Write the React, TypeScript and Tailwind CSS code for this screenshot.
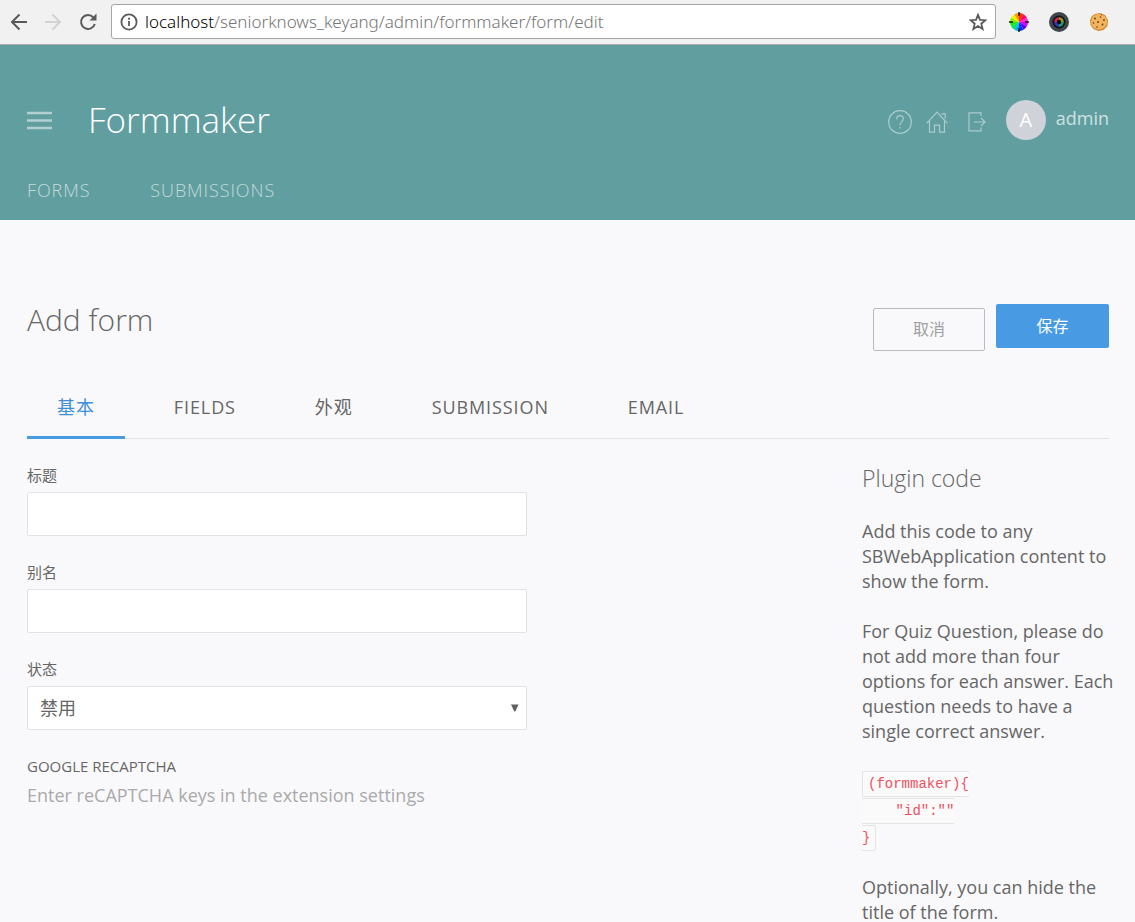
import type { ReactNode } from "react";

const navLinks = ["Forms", "Submissions"];

const tabs = ["基本", "Fields", "外观", "Submission", "Email"];

function BackIcon() {
  return (
    <svg width="18" height="18" viewBox="0 0 18 18" fill="none" stroke="currentColor" strokeWidth="2">
      <path d="M17 9H2.500M9.500 1.500 2 9l7.500 7.500" />
    </svg>
  );
}

function ForwardIcon() {
  return (
    <svg width="18" height="18" viewBox="0 0 18 18" fill="none" stroke="currentColor" strokeWidth="2">
      <path d="M1 9h14.500M8.500 1.500 16 9l-7.500 7.500" />
    </svg>
  );
}

function ReloadIcon() {
  return (
    <svg width="18" height="18" viewBox="0 0 18 18">
      <path d="M14.300 4.300A7 7 0 1 0 15.800 11" fill="none" stroke="currentColor" strokeWidth="2" />
      <path d="M17.500 0.500v7H10.500z" fill="currentColor" />
    </svg>
  );
}

function InfoIcon() {
  return (
    <svg width="18" height="18" viewBox="0 0 18 18" fill="none" stroke="#5a5a5a" strokeWidth="1.800">
      <circle cx="9" cy="9" r="7.600" />
      <path d="M9 8v5M9 4.800v2" />
    </svg>
  );
}

function StarIcon() {
  return (
    <svg width="18" height="18" viewBox="0 0 18 18" fill="none" stroke="#5a5a5a" strokeWidth="1.800">
      <path d="m9 1.800 2 5 5.500.4-4.200 3.500 1.300 5.300L9 13.100 4.400 16l1.300-5.300L1.500 7.200 7 6.800z" />
    </svg>
  );
}

const wheel = ["#ff2ad0", "#d800ff", "#5a00ff", "#0030ff", "#00b4e8", "#00e070", "#20e800", "#90f000", "#f0f000", "#ff9000", "#ff3000", "#ff0070"];

function ColorWheelIcon() {
  const point = (degrees: number) => {
    const a = (degrees * Math.PI) / 180;
    return `${10 + 9 * Math.cos(a)} ${10 + 9 * Math.sin(a)}`;
  };
  return (
    <svg width="20" height="20" viewBox="0 0 20 20">
      {wheel.map((color, i) => (
        <path key={color} d={`M10 10L${point(i * 30 - 30)}A9 9 0 0 1 ${point(i * 30)}Z`} fill={color} />
      ))}
      <path d="M10 0v4M10 16v4M0 10h4M16 10h4" stroke="#111" strokeWidth="1.400" />
    </svg>
  );
}

function LensIcon() {
  return (
    <svg width="20" height="20" viewBox="0 0 20 20">
      <circle cx="10" cy="10" r="10" fill="#41464d" />
      <circle cx="10" cy="10" r="6.500" fill="#101216" />
      <g fill="none" strokeWidth="2.600">
        <path d="M6.500 10A3.500 3.500 0 0 1 10 6.500" stroke="#d82050" />
        <path d="M10 6.500a3.500 3.500 0 0 1 3.500 3.500" stroke="#8a9a20" />
        <path d="M13.500 10a3.500 3.500 0 0 1-3.500 3.500" stroke="#18a060" />
        <path d="M10 13.500A3.500 3.500 0 0 1 6.500 10" stroke="#4030c0" />
      </g>
      <circle cx="10" cy="10" r="1.800" fill="#080808" />
    </svg>
  );
}

function CookieIcon() {
  return (
    <svg width="20" height="20" viewBox="0 0 20 20">
      <path d="M6 2 11 1l5 2 3 5-.5 6-4 4-5 1-5-2-3-4L1 8l2-4z" fill="#d48a34" />
      <path d="M7 2.500 11 2l4.500 2L18 8l-.5 5-3.500 3.500-5 1-4.500-2L2 12l.3-4L4 4.500z" fill="#f2b45e" />
      <g fill="#6b3a12">
        <circle cx="6" cy="6.500" r=".9" />
        <circle cx="11.500" cy="5" r=".8" />
        <circle cx="15" cy="8" r=".9" />
        <circle cx="9" cy="10" r=".9" />
        <circle cx="4.500" cy="11" r=".8" />
        <circle cx="13.500" cy="12.500" r=".9" />
        <circle cx="8" cy="15" r=".8" />
        <circle cx="12.500" cy="2.800" r=".6" />
      </g>
    </svg>
  );
}

function MenuIcon() {
  return (
    <svg width="25" height="19" viewBox="0 0 25 19" stroke="currentColor" strokeWidth="2.400">
      <path d="M0 2h25M0 9.500h25M0 17h25" />
    </svg>
  );
}

function HelpIcon() {
  return (
    <svg width="24" height="24" viewBox="0 0 24 24" fill="none" stroke="currentColor" strokeWidth="1.200">
      <circle cx="12" cy="12" r="11.300" />
      <path d="M8.700 9.200c0-2.200 1.400-3.500 3.300-3.500s3.300 1.300 3.300 3.200c0 2.700-3.300 2.900-3.300 6.300M12 17v1.500" />
    </svg>
  );
}

function HomeIcon() {
  return (
    <svg width="22" height="22" viewBox="0 0 22 22" fill="none" stroke="currentColor" strokeWidth="1.200">
      <path d="M.6 12.400 11 1.200l10.400 11.200M3.500 10v11.200h5v-7h5v7h5V10M15.500 2.800h3.700v5" />
    </svg>
  );
}

function LogoutIcon() {
  return (
    <svg width="18" height="20" viewBox="0 0 18 20" fill="none" stroke="currentColor" strokeWidth="1.200">
      <path d="M13 4V.8H1v18h12v-3.200M6 10h11M13 6l4 4-4 4" />
    </svg>
  );
}

function BrowserBar() {
  return (
    <div className="flex h-[45px] shrink-0 items-center border-b border-[#b0acac] bg-[#f1f1f1] pr-[26px] pb-px pl-2.5 text-[#5a5a5a]">
      <button aria-label="Back"><BackIcon /></button>
      <button aria-label="Forward" className="ml-4 text-[#d3d3d3]" disabled><ForwardIcon /></button>
      <button aria-label="Reload" className="ml-[17px]"><ReloadIcon /></button>
      <div className="ml-3.5 flex h-[35px] min-w-0 flex-1 items-center rounded-[3px] border border-[#a6a6a6] bg-white px-2">
        <InfoIcon />
        <div className="ml-[7px] flex-1 truncate font-['Noto_Sans','Open_Sans',sans-serif] text-[17px] font-light text-[#757575]">
          <span className="text-black">localhost</span>/seniorknows_keyang/admin/formmaker/form/edit
        </div>
        <button aria-label="Bookmark"><StarIcon /></button>
      </div>
      <div className="ml-[13px] flex items-center gap-5">
        <button aria-label="Color picker"><ColorWheelIcon /></button>
        <button aria-label="Camera"><LensIcon /></button>
        <button aria-label="Cookies"><CookieIcon /></button>
      </div>
    </div>
  );
}

function Header() {
  return (
    <header className="h-[175px] shrink-0 bg-[#609ea0] pt-12 pr-[26px] pl-[27px]">
      <div className="flex h-[54px] items-center">
        <button aria-label="Menu" className="text-[#b2d0d1]"><MenuIcon /></button>
        <h1 className="ml-9 text-[35px] font-light text-white">Formmaker</h1>
        <div className="ml-auto flex items-center text-[#abcccd]">
          <div className="flex items-center pt-1">
            <a href="#help" aria-label="Help"><HelpIcon /></a>
            <a href="#home" aria-label="Home" className="ml-3.5"><HomeIcon /></a>
            <a href="#logout" aria-label="Log out" className="ml-5"><LogoutIcon /></a>
          </div>
          <a href="#profile" className="ml-5 flex items-center gap-2.5 text-[18px] text-[#cfe1e2]">
            <span className="flex size-10 items-center justify-center rounded-full bg-[#cfd2d8] text-xl text-white">A</span>
            <span className="pb-1">admin</span>
          </a>
        </div>
      </div>
      <nav className="mt-[29px] flex gap-[60px] text-[18px] leading-7 font-light tracking-wider text-[#c4dbdc] uppercase">
        {navLinks.map((label) => (
          <a key={label} href={`#${label}`}>{label}</a>
        ))}
      </nav>
    </header>
  );
}

function Field({ id, label, children }: { id: string; label: string; children: ReactNode }) {
  return (
    <div>
      <label htmlFor={id} className="block h-[29px] text-[15px] leading-6">{label}</label>
      {children}
    </div>
  );
}

export default function App() {
  return (
    <div className="flex min-h-screen flex-col bg-[#f9f9fb] font-['Open_Sans','Noto_Sans_CJK_SC',sans-serif] text-[#666]">
      <BrowserBar />
      <Header />
      <main className="flex-1 pt-20 pr-[26px] pl-[27px]">
        <div className="flex justify-between">
          <h2 className="text-3xl leading-10 font-light">Add form</h2>
          <div className="flex items-start gap-[11px] pt-1 text-base">
            <button className="mt-1 h-[43px] w-28 rounded-xs border border-[#bbb] pb-0.5 text-[#a0a0a0]">取消</button>
            <button className="h-11 w-[113px] rounded-xs bg-[#489ae2] text-white">保存</button>
          </div>
        </div>
        <div role="tablist" className="mt-6 flex h-16 gap-[19px] border-b border-[#e3e4e6]">
          {tabs.map((tab, i) => (
            <button
              key={tab}
              role="tab"
              aria-selected={i === 0}
              className="-mb-px border-b-3 border-transparent px-[30px] pt-1 text-[18px] tracking-wider uppercase aria-selected:border-[#489ae2] aria-selected:text-[#3d8fd8]"
            >
              {tab}
            </button>
          ))}
        </div>
        <div className="flex justify-between">
          <form className="flex w-[500px] flex-col gap-6 pt-6">
            <Field id="title" label="标题">
              <input id="title" className="block h-11 w-full rounded-xs border border-[#e2e2e2] bg-white px-3 text-[18px]" />
            </Field>
            <Field id="alias" label="别名">
              <input id="alias" className="block h-11 w-full rounded-xs border border-[#e2e2e2] bg-white px-3 text-[18px]" />
            </Field>
            <Field id="status" label="状态">
              <div className="relative">
                <select id="status" className="block h-11 w-full appearance-none rounded-xs border border-[#e2e2e2] bg-white px-3 text-[18px]">
                  <option>禁用</option>
                </select>
                <svg width="8" height="8" viewBox="0 0 8 8" className="pointer-events-none absolute top-[18px] right-2 fill-[#606060]">
                  <path d="M0 0.500h7.500L4.300 7.500h-1z" />
                </svg>
              </div>
            </Field>
            <div>
              <h3 className="text-[15px] leading-6 uppercase">Google reCAPTCHA</h3>
              <p className="mt-[5px] text-[18px] leading-[25px] text-[#aaa]">Enter reCAPTCHA keys in the extension settings</p>
            </div>
          </form>
          <aside className="-mr-2 w-[255px] pt-6 text-[18px] leading-[25px]">
            <h3 className="text-[23px] leading-[30px] font-light">Plugin code</h3>
            <p className="mt-[26px]">Add this code to any SBWebApplication content to show the form.</p>
            <p className="mt-[25px]">For Quiz Question, please do not add more than four options for each answer. Each question needs to have a single correct answer.</p>
            <div className="mt-[27px] flex flex-col items-start gap-px font-['Liberation_Mono',monospace] text-[14px] leading-6 whitespace-pre text-[#ef5060]">
              <code className="rounded-l-xs border-y border-l border-[#e3e4e6] bg-[#fafafa] pl-[5px]">{"(formmaker){"}</code>
              <code className="border-y border-[#e3e4e6] bg-[#fafafa]">{'    "id":""'}</code>
              <code className="rounded-r-xs border-y border-r border-[#e3e4e6] bg-[#fafafa] pr-[5px]">{"}"}</code>
            </div>
            <p className="mt-6">Optionally, you can hide the title of the form.</p>
          </aside>
        </div>
      </main>
    </div>
  );
}
